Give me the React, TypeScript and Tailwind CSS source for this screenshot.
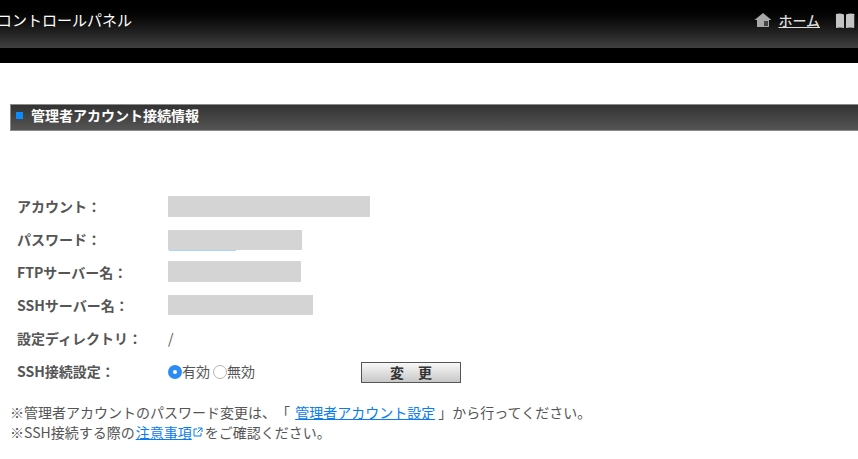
const font = "font-['Noto_Sans_CJK_JP','Liberation_Sans',sans-serif]";

function HomeIcon() {
  return (
    <svg width="18" height="16" viewBox="0 0 18 16" className="mr-[6px]">
      <path d="M9 1 L17.5 8 L0.5 8 Z" fill="#a8a8a8" />
      <rect x="3" y="8" width="12" height="7" fill="#a8a8a8" />
      <rect x="10" y="9" width="4" height="5" fill="#444" />
    </svg>
  );
}

function BookIcon() {
  return (
    <svg width="21" height="18" viewBox="0 0 21 18" className="mt-[4px]">
      <path d="M1 1 Q5 0 9 1.5 L9 15 Q5 14 1 15 Z" fill="#c4c4c4" />
      <path d="M11 1.5 Q15 0 19.5 1 L19.5 15 Q15 14 11 15 Z" fill="#c4c4c4" />
      <path d="M0.5 2 L0.5 17 M20 2 L20 17" stroke="#111" strokeWidth="1" />
    </svg>
  );
}

function Row({ label, children }: { label: string; children: React.ReactNode }) {
  return (
    <div className="flex h-[33px] items-center">
      <div className="w-[168px] shrink-0 pl-[17px] text-[14px] font-bold text-[#555]">{label}</div>
      {children}
    </div>
  );
}

function Radio({ checked }: { checked?: boolean }) {
  if (checked) {
    return (
      <span className="flex h-[14px] w-[14px] shrink-0 items-center justify-center rounded-full bg-[#2b8cf5]">
        <span className="h-[4px] w-[4px] rounded-full bg-white" />
      </span>
    );
  }
  return <span className="h-[14px] w-[14px] shrink-0 rounded-full border border-[#b5b5b5] bg-white" />;
}

export default function App() {
  return (
    <div className={`h-[459px] w-[858px] overflow-hidden bg-white ${font}`}>
      <header className="flex h-12 items-center justify-between bg-gradient-to-b from-[#000] to-[#404040] pb-[8px]">
        <div className="-ml-[3px] text-[15px] text-white">コントロールパネル</div>
        <div className="flex items-center pr-[2px]">
          <HomeIcon />
          <a className="mr-[15px] text-[14px] font-medium text-[#ddd] underline">ホーム</a>
          <BookIcon />
        </div>
      </header>
      <div className="h-[15px] bg-black" />

      <div className="mt-[41px] ml-[10px] flex h-[27px] items-center border border-r-0 border-[#8a8a8a] bg-gradient-to-b from-[#333] to-[#555] pb-[5px] pl-[5px]">
        <span className="mr-[8px] h-[7px] w-[7px] bg-[#0a8cff]" />
        <span className="text-[14px] font-bold text-white">管理者アカウント接続情報</span>
      </div>

      <div className="mt-[59px]">
        <Row label="アカウント：">
          <div className="h-[21px] w-[202px] bg-[#d4d4d4]" />
        </Row>
        <Row label="パスワード：">
          <div className="relative h-[20px] w-[134px] bg-[#d4d4d4]">
            <div className="absolute top-[20px] left-[1px] h-px w-[67px] bg-[#a9d4ff]" />
          </div>
        </Row>
        <Row label="FTPサーバー名：">
          <div className="mb-[2px] h-[21px] w-[133px] bg-[#d4d4d4]" />
        </Row>
        <Row label="SSHサーバー名：">
          <div className="mb-[1px] h-[20px] w-[145px] bg-[#d4d4d4]" />
        </Row>
        <Row label="設定ディレクトリ：">
          <span className="text-[14px] text-[#555]">/</span>
        </Row>
        <Row label="SSH接続設定：">
          <div className="flex w-[193px] items-center text-[14px] text-[#555]">
            <Radio checked />
            <span className="mr-[3px]">有効</span>
            <Radio />
            <span>無効</span>
          </div>
          <button className="mt-[2px] flex h-[21px] w-[100px] items-center justify-center border border-[#555] bg-gradient-to-b from-[#f8f8f8] to-[#c8c8c8] text-[14px] font-bold text-[#333]">
            変　更
          </button>
        </Row>
      </div>

      <div className="mt-[14px] ml-[10px] text-[14px] leading-[20px] text-[#555] [text-spacing-trim:space-all]">
        <p>
          ※管理者アカウントのパスワード変更は、「 <a className="ml-[2px] text-[#0a7cf0] underline">管理者アカウント設定</a> 」から行ってください。
        </p>
        <p className="flex items-center">
          ※SSH接続する際の<a className="ml-[1px] text-[#0a7cf0] underline">注意事項</a>
          <svg width="10" height="10" viewBox="0 0 10 10" fill="none" stroke="#0a7cf0" strokeWidth="1" className="mx-[1.5px]">
            <path d="M4 2 H1 V9 H8 V6 M5 1 H9 V5 M9 1 L4.5 5.5" />
          </svg>
          をご確認ください。
        </p>
      </div>
    </div>
  );
}
